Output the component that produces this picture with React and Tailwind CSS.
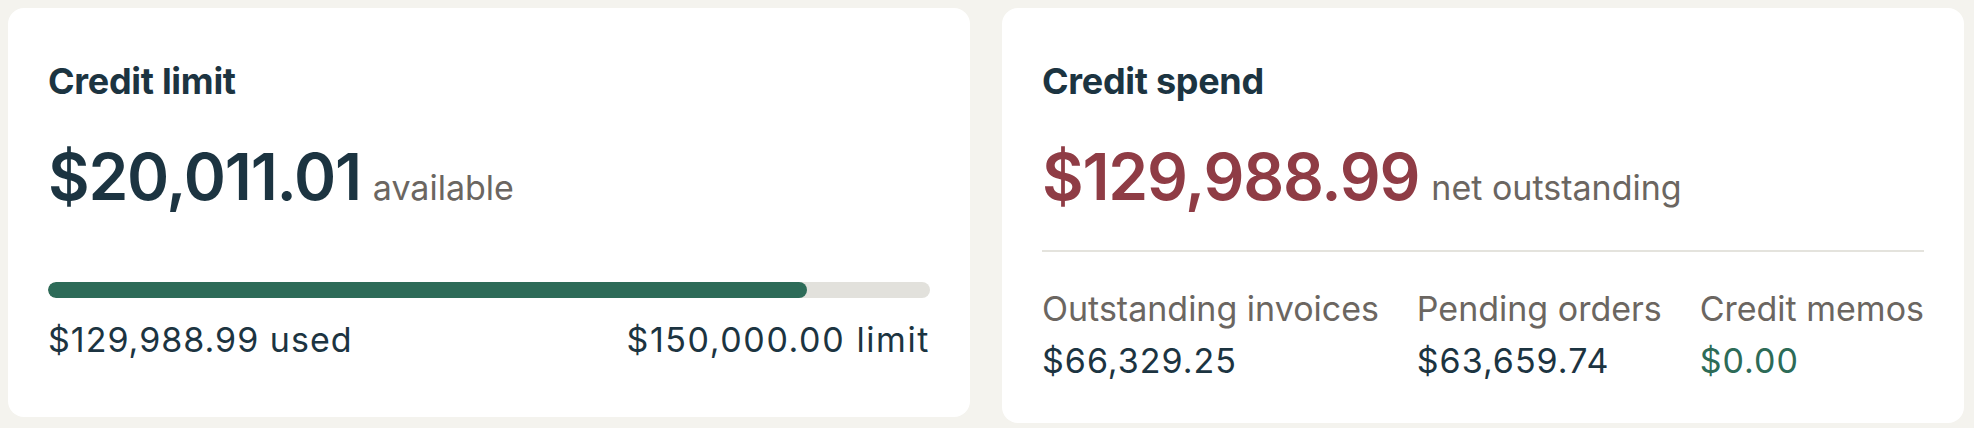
import React from 'react'

const font = { fontFamily: 'Inter, "Liberation Sans", sans-serif' }

const stats = [
  { label: 'Outstanding invoices', value: '$66,329.25', tone: 'text-[#1c3441]' },
  { label: 'Pending orders', value: '$63,659.74', tone: 'text-[#1c3441]' },
  { label: 'Credit memos', value: '$0.00', tone: 'text-[#2d6b57]' },
]

function Heading({ children }) {
  return <h2 className="text-[36px] leading-[40px] font-bold text-[#1c3441] tracking-[-0.3px]">{children}</h2>
}

function Amount({ value, note, color }) {
  return (
    <div className="mt-10 flex items-baseline">
      <span className={`text-[64px] leading-[72px] font-semibold tracking-[-1.2px] ${color}`}>{value}</span>
      <span className="ml-3 text-[34px] leading-[40px] text-[#6b6661]">{note}</span>
    </div>
  )
}

export default function App() {
  return (
    <div style={font} className="w-[1974px] h-[428px] bg-[#f4f3ee] pl-2 pr-[10px] pt-2">
      <div className="grid grid-cols-2 gap-8 items-start">
        {/* credit limit */}
        <div className="bg-white rounded-2xl px-10 pt-[53px] pb-[57px]">
          <Heading>Credit limit</Heading>
          <Amount value="$20,011.01" note="available" color="text-[#1c3441]" />
          <div className="mt-[69px] h-4 rounded-full bg-[#e2e1dc] overflow-hidden">
            <div className="h-full w-[86%] rounded-full bg-[#2d6b58]" />
          </div>
          <div className="mt-[22px] flex justify-between text-[34px] leading-[40px] tracking-[1px] text-[#1c3441]">
            <span>$129,988.99 used</span>
            <span className="tracking-[1.6px]">$150,000.00 limit</span>
          </div>
        </div>

        {/* credit spend */}
        <div className="bg-white rounded-2xl px-10 pt-[53px] pb-[42px]">
          <Heading>Credit spend</Heading>
          <Amount value="$129,988.99" note="net outstanding" color="text-[#8f3c45]" />
          <div className="mt-[37px] h-[2px] bg-[#e4e3dd]" />
          <div className="mt-[37px] flex justify-between">
            {stats.map((s) => (
              <div key={s.label} className="flex flex-col gap-3">
                <span className="text-[34px] leading-[40px] text-[#6b6661]">{s.label}</span>
                <span className={`text-[34px] leading-[40px] tracking-[1px] ${s.tone}`}>{s.value}</span>
              </div>
            ))}
          </div>
        </div>
      </div>
    </div>
  )
}
